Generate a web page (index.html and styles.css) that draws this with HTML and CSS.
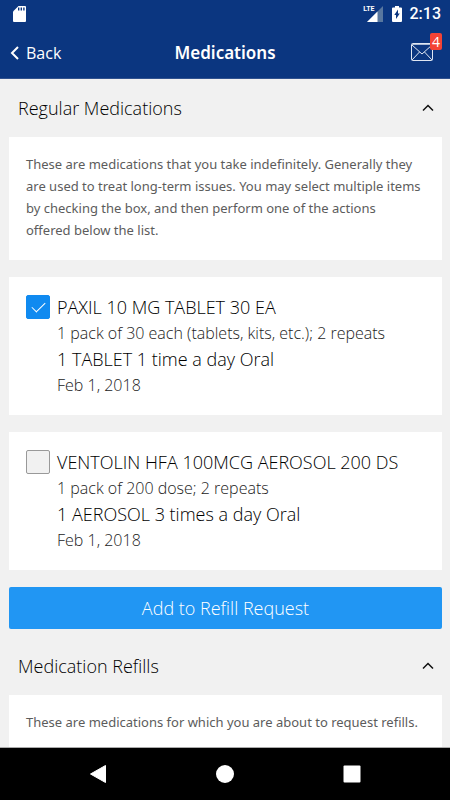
FILE: index.html
```
<!DOCTYPE html>
<html lang="en">
<head>
<meta charset="utf-8">
<meta name="viewport" content="width=device-width, initial-scale=1">
<title>Medications</title>
<link rel="stylesheet" href="styles.css">
</head>
<body>
<div class="status-bar">
  <svg class="sd-card" width="14" height="18" viewBox="0 0 14 18" aria-hidden="true"><path d="M5.500 1H12a1 1 0 0 1 1 1v14a1 1 0 0 1-1 1H1a1 1 0 0 1-1-1V6.500z" fill="#fff"/><path d="M5 2.500h1.400v3H5zM7.600 2.500H9v3H7.600zM10.200 2.500h1.400v3h-1.400z" fill="#0b3680"/></svg>
  <div class="status-right">
    <div class="signal">
      <svg width="20" height="18" viewBox="0 0 20 18" aria-hidden="true"><path d="M19 1v16H3z" fill="#58779f"/><path d="M13.500 6.500V17H3z" fill="#fff"/><path d="M0 0h10v8H0z" fill="#0b3680"/></svg>
      <span class="network">LTE</span>
    </div>
    <svg width="10" height="18" viewBox="0 0 10 18" aria-hidden="true"><path d="M3 1h4v1.500h2a1 1 0 0 1 1 1V16a1 1 0 0 1-1 1H1a1 1 0 0 1-1-1V3.500a1 1 0 0 1 1-1h2z" fill="#fff"/><path d="M6 4.500v4h1.800L4 14v-4H2.300z" fill="#0b3680"/></svg>
    <span class="clock">2:13</span>
  </div>
</div>
<header class="app-bar">
  <a class="back" href="#"><svg width="10" height="14" viewBox="0 0 10 14" aria-hidden="true"><path d="M8 1 2 7l6 6" fill="none" stroke="#fff" stroke-width="2"/></svg>Back</a>
  <h1 class="title">Medications</h1>
  <button class="mail" type="button" aria-label="Messages">
    <svg width="23" height="19" viewBox="0 0 23 19" aria-hidden="true"><g fill="none" stroke="#dfe6f2"><rect x=".5" y=".5" width="21" height="17" rx="1"/><path d="M.5 1.500h21" stroke="#a9b9d4"/><path d="m1 2 10 9L21 2M1 17l7.500-8M21 17l-7.500-8"/></g></svg>
    <span class="badge">4</span>
  </button>
</header>
<main class="content">
  <section>
    <h2><button class="section-toggle" type="button" aria-expanded="true">Regular Medications<svg width="12" height="8" viewBox="0 0 12 8" aria-hidden="true"><path d="m1 6.500 5-5 5 5" fill="none" stroke="#111" stroke-width="1.500"/></svg></button></h2>
    <div class="cards">
      <p class="card intro">These are medications that you take indefinitely. Generally they are used to treat long-term issues. You may select multiple items by checking the box, and then perform one of the actions offered below the list.</p>
      <div class="card medication">
        <input type="checkbox" id="paxil" checked>
        <div class="details">
          <label for="paxil">PAXIL 10 MG TABLET 30 EA</label>
          <p class="meta">1 pack of 30 each (tablets, kits, etc.); 2 repeats</p>
          <p>1 TABLET 1 time a day Oral</p>
          <p class="meta">Feb 1, 2018</p>
        </div>
      </div>
      <div class="card medication">
        <input type="checkbox" id="ventolin">
        <div class="details">
          <label for="ventolin">VENTOLIN HFA 100MCG AEROSOL 200 DS</label>
          <p class="meta">1 pack of 200 dose; 2 repeats</p>
          <p>1 AEROSOL 3 times a day Oral</p>
          <p class="meta">Feb 1, 2018</p>
        </div>
      </div>
      <button class="primary" type="button">Add to Refill Request</button>
    </div>
  </section>
  <section>
    <h2><button class="section-toggle" type="button" aria-expanded="true">Medication Refills<svg width="12" height="8" viewBox="0 0 12 8" aria-hidden="true"><path d="m1 6.500 5-5 5 5" fill="none" stroke="#111" stroke-width="1.500"/></svg></button></h2>
    <div class="cards">
      <p class="card intro">These are medications for which you are about to request refills.</p>
    </div>
  </section>
</main>
<nav class="system-nav" aria-label="System">
  <button type="button" aria-label="Back"><svg width="18" height="20" viewBox="0 0 18 20" aria-hidden="true"><path d="M16.500 1.500v17L1.500 10z" fill="#fff" stroke="#fff" stroke-linejoin="round"/></svg></button>
  <button type="button" aria-label="Home"><svg width="18" height="18" viewBox="0 0 18 18" aria-hidden="true"><circle cx="9" cy="9" r="9" fill="#fff"/></svg></button>
  <button type="button" aria-label="Recent apps"><svg width="18" height="18" viewBox="0 0 18 18" aria-hidden="true"><rect x="0.500" y="0.500" width="17" height="17" rx="1" fill="#fff"/></svg></button>
</nav>
</body>
</html>
```
FILE: styles.css
```
* {
  box-sizing: border-box;
}

body {
  margin: 0;
  height: 100vh;
  display: flex;
  flex-direction: column;
  background: #f1f1f1;
  color: #000;
  font-family: "Open Sans", sans-serif;
  font-size: 18px;
  font-weight: 300;
}

h1, h2, p {
  margin: 0;
  font: inherit;
}

button {
  border: 0;
  padding: 0;
  background: none;
  color: inherit;
  font: inherit;
}

svg {
  display: block;
}

.status-bar {
  flex: none;
  display: flex;
  align-items: center;
  justify-content: space-between;
  height: 27px;
  padding: 0 9px 0 13px;
  background: #0b3680;
  color: #fff;
}

.status-right {
  display: flex;
  align-items: center;
  gap: 8px;
}

.signal {
  position: relative;
}

.network {
  position: absolute;
  top: 0;
  right: 9px;
  font: 700 7px/9px Roboto, sans-serif;
}

.clock {
  font: 500 16px/20px Roboto, sans-serif;
}

.app-bar {
  flex: none;
  display: grid;
  grid-template-columns: 1fr auto 1fr;
  align-items: center;
  height: 52px;
  padding: 0 10px;
  border-bottom: 1px solid #31528f;
  background: #0b3680;
  color: #fff;
}

.back {
  display: flex;
  align-items: center;
  gap: 6px;
  color: inherit;
  font-size: 16px;
  font-weight: 400;
  line-height: 22px;
  text-decoration: none;
}

.title {
  font-family: "Noto Sans", sans-serif;
  font-size: 17px;
  font-weight: 600;
  line-height: 22px;
}

.mail {
  position: relative;
  justify-self: end;
  margin-right: 6px;
}

.badge {
  position: absolute;
  top: -10px;
  right: -8px;
  width: 12px;
  border-radius: 2px;
  background: #f44336;
  font-size: 14px;
  font-weight: 400;
  line-height: 17px;
  text-align: center;
}

.content {
  flex: 1;
  min-height: 0;
  overflow: hidden;
}

.section-toggle {
  display: flex;
  align-items: center;
  justify-content: space-between;
  width: 100%;
  height: 58px;
  padding: 0 16px 0 18px;
}

.cards {
  display: flex;
  flex-direction: column;
  gap: 17px;
  padding: 0 8px 8px 9px;
}

.card {
  padding: 17px;
  background: #fff;
}

.intro {
  padding: 16px 20px 19px 17px;
  color: #5c5c5c;
  font-family: "Noto Sans", sans-serif;
  font-size: 13px;
  font-weight: 400;
  line-height: 22px;
}

.medication {
  display: flex;
  gap: 7px;
}

.medication input {
  appearance: none;
  flex: none;
  width: 24px;
  height: 24px;
  margin: 1px 0 0;
  border: 1px solid #999;
  border-radius: 2px;
  background: #f1f1f1;
}

.medication input:checked {
  display: grid;
  place-items: center;
  border-color: #108af0;
  background: #108af0;
}

.medication input:checked::before {
  content: "";
  width: 12px;
  height: 6px;
  margin-bottom: 4px;
  border: solid #fff;
  border-width: 0 0 1px 1px;
  transform: rotate(-45deg);
}

.details {
  line-height: 26px;
}

.details label {
  display: block;
}

.details .meta {
  color: #222;
  font-size: 16px;
}

.primary {
  height: 42px;
  border-radius: 2px;
  background: #2196f3;
  color: #fff;
}

.system-nav {
  flex: none;
  display: flex;
  align-items: center;
  justify-content: center;
  gap: 109px;
  height: 53px;
  border-top: 1px solid #aaa;
  background: #000;
}
```
